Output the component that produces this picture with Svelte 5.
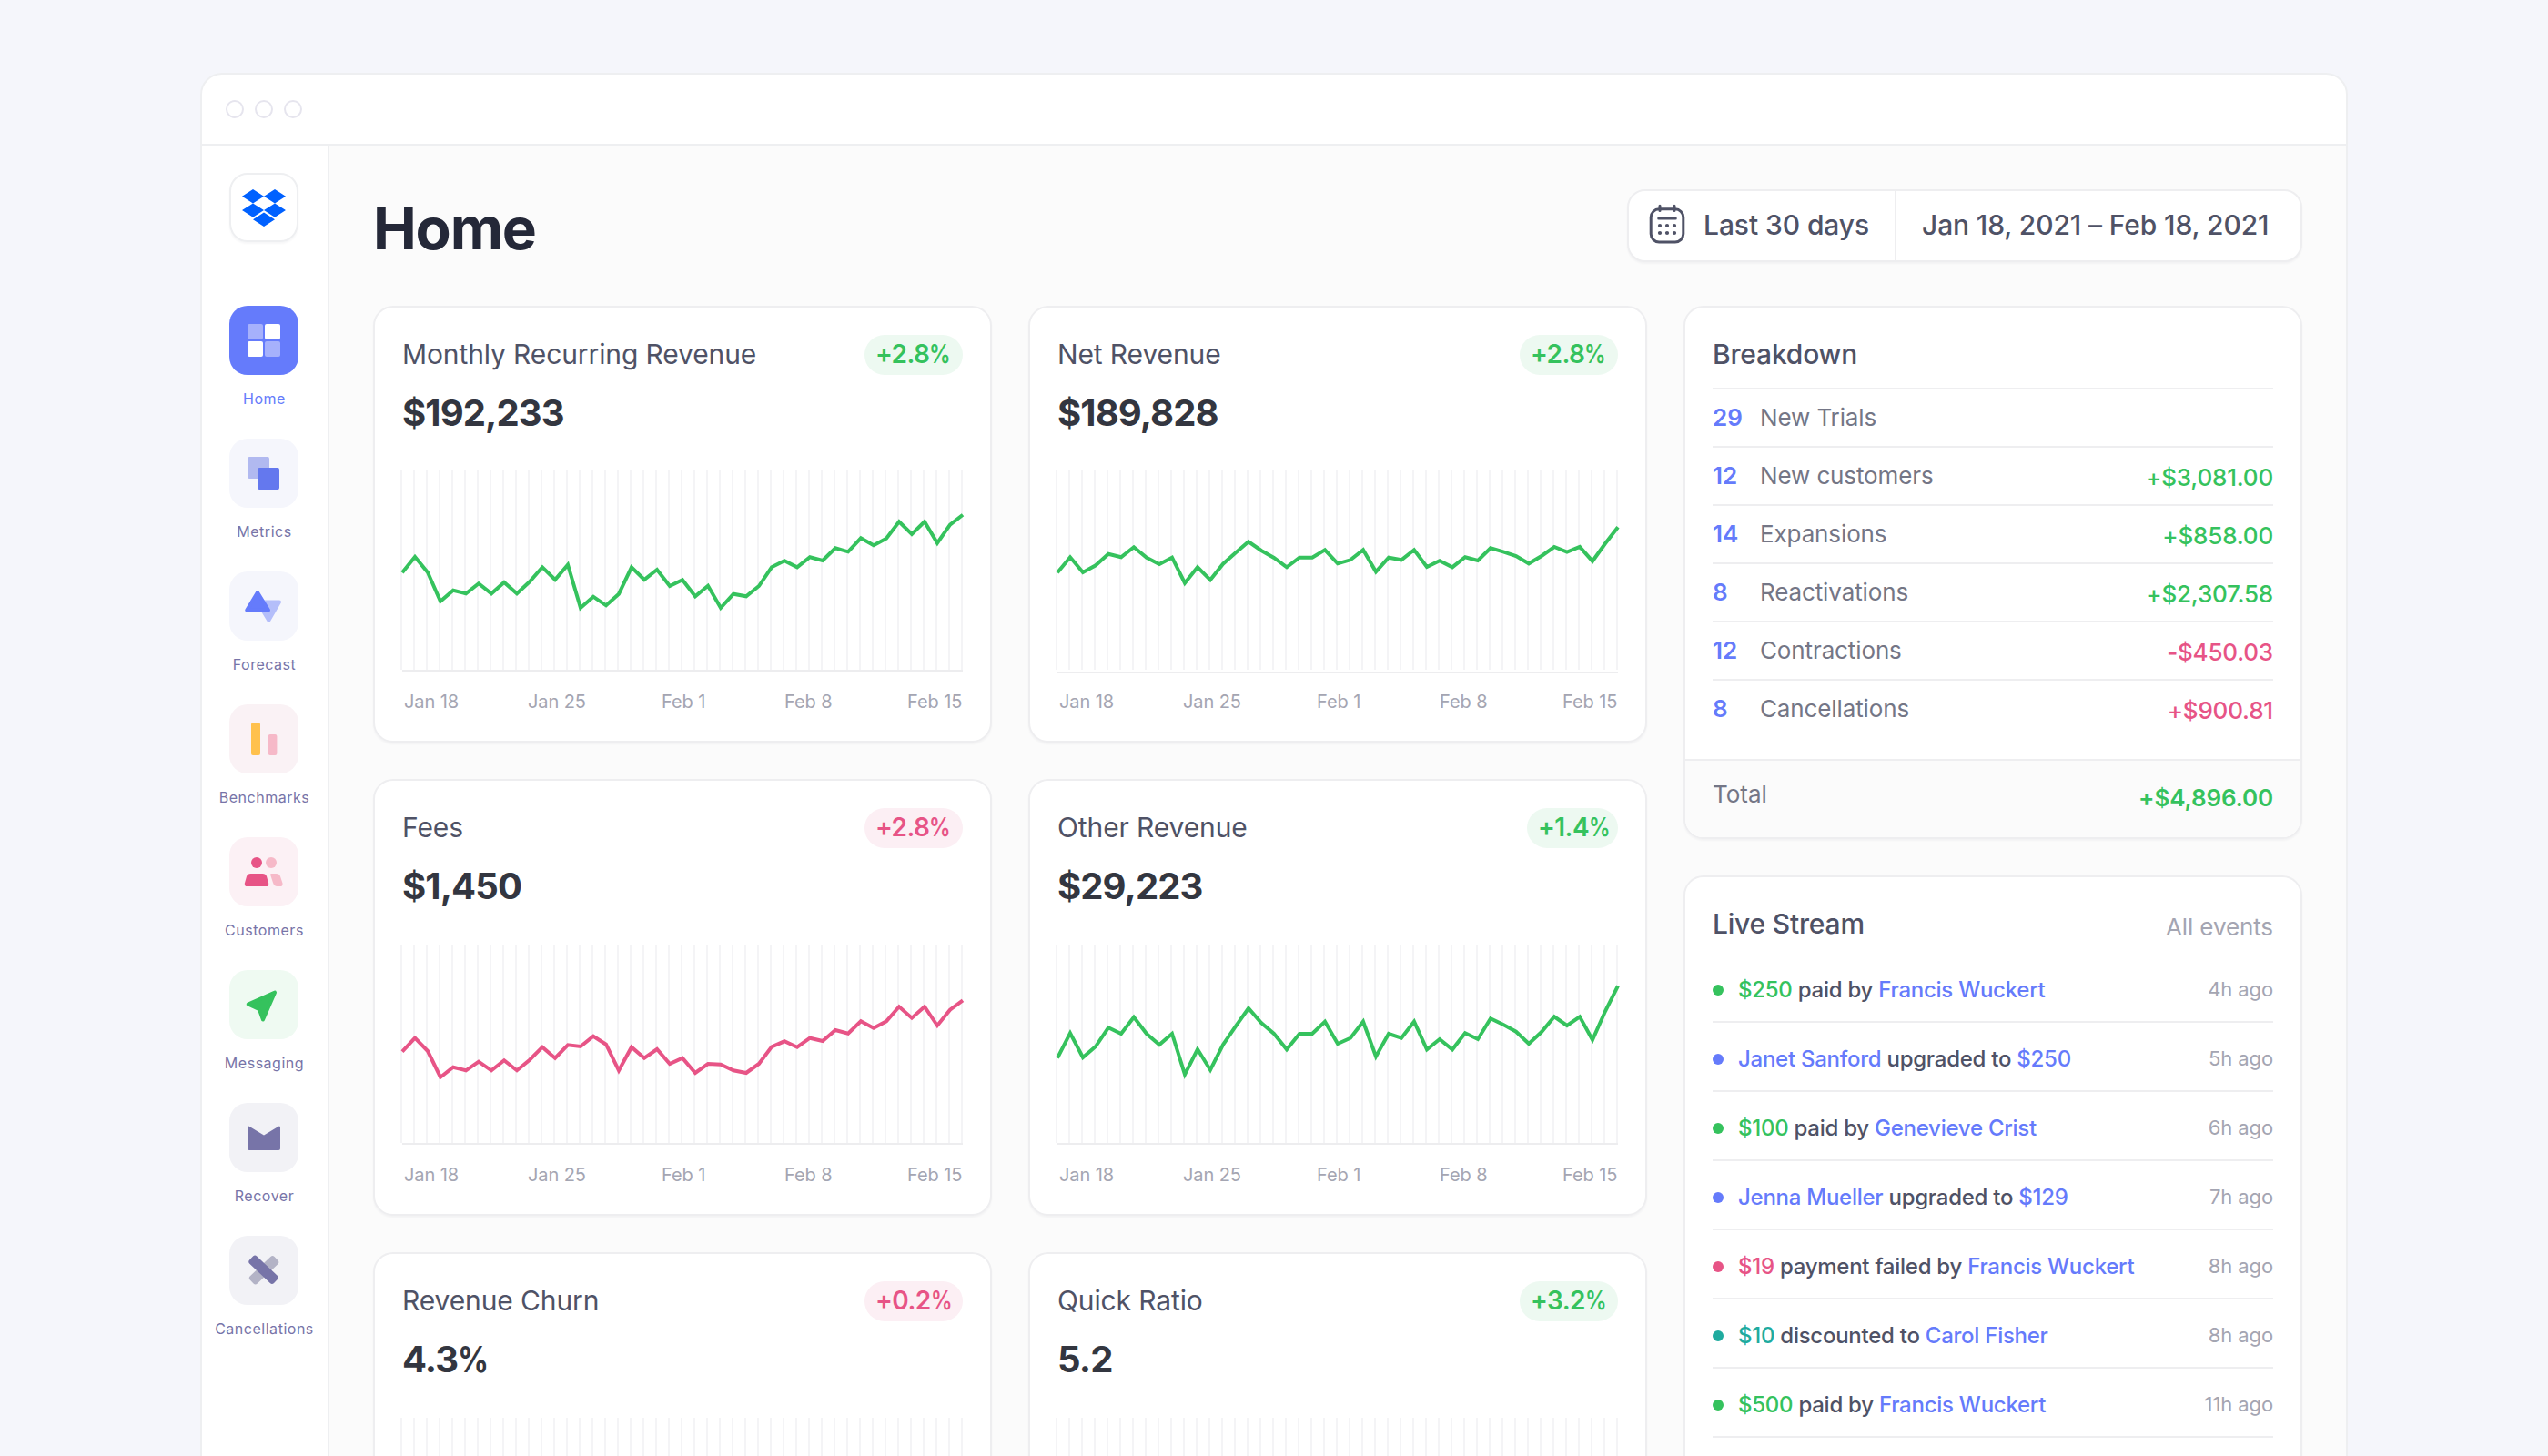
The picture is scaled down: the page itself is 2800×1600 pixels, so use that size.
<script>
  const nav = [
    { id: 'home', label: 'Home' },
    { id: 'metrics', label: 'Metrics' },
    { id: 'forecast', label: 'Forecast' },
    { id: 'benchmarks', label: 'Benchmarks' },
    { id: 'customers', label: 'Customers' },
    { id: 'messaging', label: 'Messaging' },
    { id: 'recover', label: 'Recover' },
    { id: 'cancellations', label: 'Cancellations' }
  ];

  // Samples are measured downwards from the top of the plot, in thirds of a pixel.
  const mrr = [340, 288, 339, 434, 398, 409, 376, 409, 372, 409, 370, 322, 363, 314, 456, 419, 448, 410, 322, 363, 330, 384, 364, 418, 383, 456, 410, 418, 384, 322, 301, 322, 289, 300, 259, 271, 226, 250, 227, 172, 213, 172, 242, 182, 149];
  const net = [340, 289, 339, 316, 278, 289, 256, 290, 312, 290, 374, 322, 364, 311, 274, 238, 267, 291, 322, 290, 290, 265, 310, 298, 265, 337, 290, 298, 265, 321, 301, 322, 289, 300, 259, 271, 285, 310, 285, 255, 272, 255, 302, 244, 190];
  const fees = [359, 314, 357, 443, 410, 421, 392, 421, 388, 421, 386, 344, 380, 337, 342, 308, 335, 421, 344, 380, 351, 399, 380, 429, 399, 401, 421, 429, 399, 343, 325, 344, 314, 324, 288, 299, 259, 281, 259, 211, 248, 211, 273, 221, 190];
  const other = [380, 298, 378, 342, 280, 300, 245, 300, 336, 300, 434, 351, 419, 336, 275, 216, 264, 300, 352, 300, 300, 260, 333, 314, 260, 375, 300, 314, 260, 352, 318, 352, 298, 318, 250, 270, 293, 333, 294, 244, 273, 244, 320, 226, 142];

  const dates = ['Jan 18', 'Jan 25', 'Feb 1', 'Feb 8', 'Feb 15'];
  const cards = [
    { title: 'Monthly Recurring Revenue', value: '$192,233', delta: '+2.8', tone: 'green', data: mrr, top: 0, axis: 220, dates },
    { title: 'Net Revenue', value: '$189,828', delta: '+2.8', tone: 'green', data: net, top: 0, axis: 222, dates },
    { title: 'Fees', value: '$1,450', delta: '+2.8', tone: 'pink', data: fees, top: 2, axis: 220, dates },
    { title: 'Other Revenue', value: '$29,223', delta: '+1.4', tone: 'green', narrow: true, data: other, top: 2, axis: 220, dates },
    { title: 'Revenue Churn', value: '4.3', percent: true, delta: '+0.2', tone: 'pink', data: fees, top: 2, axis: 220, dates: [] },
    { title: 'Quick Ratio', value: '5.2', delta: '+3.2', tone: 'green', data: other, top: 2, axis: 220, dates: [] }
  ];
  const ticks = Array.from({ length: 45 }, (_, i) => i * 14);
  const line = (data) => data.map((v, i) => `${2 + i * 14},${(v / 3).toFixed(1)}`).join(' ');

  const breakdown = [
    { n: 29, label: 'New Trials', amount: '', tone: 'green' },
    { n: 12, label: 'New customers', amount: '+$3,081.00', tone: 'green' },
    { n: 14, label: 'Expansions', amount: '+$858.00', tone: 'green' },
    { n: 8, label: 'Reactivations', amount: '+$2,307.58', tone: 'green' },
    { n: 12, label: 'Contractions', amount: '-$450.03', tone: 'pink' },
    { n: 8, label: 'Cancellations', amount: '+$900.81', tone: 'pink' }
  ];

  const events = [
    { tone: 'green', a: '$250', mid: 'paid by', b: 'Francis Wuckert', time: '4h ago' },
    { tone: 'blue', a: 'Janet Sanford', mid: 'upgraded to', b: '$250', time: '5h ago' },
    { tone: 'green', a: '$100', mid: 'paid by', b: 'Genevieve Crist', time: '6h ago' },
    { tone: 'blue', a: 'Jenna Mueller', mid: 'upgraded to', b: '$129', time: '7h ago' },
    { tone: 'pink', a: '$19', mid: 'payment failed by', b: 'Francis Wuckert', time: '8h ago' },
    { tone: 'teal', a: '$10', mid: 'discounted to', b: 'Carol Fisher', time: '8h ago' },
    { tone: 'green', a: '$500', mid: 'paid by', b: 'Francis Wuckert', time: '11h ago' }
  ];
</script>

<div class="page">
  <div class="window">
    <div class="titlebar">
      <span class="light"></span>
      <span class="light"></span>
      <span class="light"></span>
    </div>
    <div class="body">
      <nav class="sidebar">
        <div class="logo">
          <svg width="48" height="42" viewBox="0 0 48 42" fill="#0061ff">
            <path d="M12 0 24 7.7 12 15.4 0 7.7ZM36 0 48 7.7 36 15.4 24 7.7ZM12 15.4 24 23.1 12 30.8 0 23.1ZM36 15.4 48 23.1 36 30.8 24 23.1ZM24 25.6 36 33.3 24 41 12 33.3Z" />
          </svg>
        </div>
        {#each nav as item}
          <div class="nav-item {item.id}">
            <div class="tile">
              <svg width="76" height="76" viewBox="0 0 76 76">
                {#if item.id === 'home'}
                  <rect x="20" y="20" width="17" height="17" rx="2" fill="#a6b1fc" />
                  <rect x="39" y="20" width="17" height="17" rx="2" fill="#fff" />
                  <rect x="20" y="39" width="17" height="17" rx="2" fill="#fff" />
                  <rect x="39" y="39" width="17" height="17" rx="2" fill="#a6b1fc" />
                {:else if item.id === 'metrics'}
                  <rect x="20" y="20" width="24" height="24" rx="2" fill="#b1b9f0" />
                  <rect x="31" y="32" width="24" height="24" rx="2" fill="#6478ee" />
                {:else if item.id === 'forecast'}
                  <path d="M31 33.5H55L43.3 53.8Z" fill="#b4befa" stroke="#b4befa" stroke-width="4" stroke-linejoin="round" />
                  <path d="M19.2 42.5H43L31 23Z" fill="#657bfb" stroke="#657bfb" stroke-width="4" stroke-linejoin="round" />
                {:else if item.id === 'benchmarks'}
                  <rect x="24" y="20" width="10" height="36" rx="2" fill="#ffc14d" />
                  <rect x="42.8" y="33" width="9.6" height="23" rx="2" fill="#f6b9c8" />
                {:else if item.id === 'customers'}
                  <circle cx="30" cy="28" r="6" fill="#e75486" />
                  <circle cx="46" cy="28" r="6" fill="#f6b9c8" />
                  <path d="M23.5 40H36.5Q39.9 40 41 43L43.1 50.4Q43.6 54 40.4 54H19.6Q16.4 54 16.9 50.4L19 43Q20.1 40 23.5 40Z" fill="#e75486" />
                  <path d="M45.5 40H51.5Q55 40 56 43L58.5 50.4Q59 54 55.8 54H52.6Q49.2 54 48 50L45.2 41.5Z" fill="#f6b9c8" />
                {:else if item.id === 'messaging'}
                  <path d="M50 24.7 37 54.5 33 43.3 20.7 37.5Z" fill="#35c25d" stroke="#35c25d" stroke-width="4" stroke-linejoin="round" />
                {:else if item.id === 'recover'}
                  <path d="M20 27.2Q20 24.6 22.3 25.9L38 35.4 53.7 25.9Q56 24.6 56 27.2V50.2Q56 52 54.2 52H21.8Q20 52 20 50.2Z" fill="#7774a8" />
                {:else}
                  <rect x="19.6" y="32" width="37" height="11.5" rx="3" fill="#b3b3c6" transform="rotate(-43.5 38.1 37.8)" />
                  <rect x="19" y="31.5" width="37" height="11.5" rx="3" fill="#7774a8" transform="rotate(43.5 37.5 37.3)" />
                {/if}
              </svg>
            </div>
            <span class="nav-label">{item.label}</span>
          </div>
        {/each}
      </nav>

      <main class="content">
        <header class="header">
          <h1>Home</h1>
          <div class="picker">
            <div class="preset">
              <svg width="48" height="52" viewBox="0 0 48 52" fill="none" stroke="#4f5266" stroke-width="3" stroke-linecap="round">
                <rect x="6.2" y="7.8" width="35.6" height="36.2" rx="9" />
                <path d="M16 4.2v5.2M32 4.2v5.2M14.7 18h18.6" />
                <g fill="#4f5266" stroke="none">
                  <circle cx="16" cy="26" r="2.1" /><circle cx="24" cy="26" r="2.1" /><circle cx="32" cy="26" r="2.1" />
                  <circle cx="16" cy="34" r="2.1" /><circle cx="24" cy="34" r="2.1" /><circle cx="32" cy="34" r="2.1" />
                </g>
              </svg>
              <span>Last 30 days</span>
            </div>
            <div class="range">Jan 18, 2021 – Feb 18, 2021</div>
          </div>
        </header>

        <div class="columns">
          <section class="metrics-grid">
            {#each cards as card}
              <article class="card metric">
                <div class="metric-head">
                  <h2>{card.title}</h2>
                  <span class="badge {card.tone}" class:narrow={card.narrow}>{card.delta}<span class="pct">%</span></span>
                </div>
                <div class="value">{card.value}{#if card.percent}<span class="pct">%</span>{/if}</div>
                <svg class="chart" width="620" height="224" viewBox="0 0 620 224">
                  {#each ticks as x}
                    <rect {x} y={card.top} width="2" height={220 - card.top} fill="#f4f4f6" />
                  {/each}
                  <rect x="2" y={card.axis} width="616" height="2" fill="#ededef" />
                  <polyline class={card.tone} points={line(card.data)} />
                </svg>
                <div class="dates">
                  {#each card.dates as d}<span>{d}</span>{/each}
                </div>
              </article>
            {/each}
          </section>

          <aside class="side">
            <article class="card breakdown">
              <h3>Breakdown</h3>
              <ul>
                {#each breakdown as row}
                  <li>
                    <b>{row.n}</b>
                    <span class="name">{row.label}</span>
                    <span class="amount {row.tone}">{row.amount}</span>
                  </li>
                {/each}
              </ul>
              <footer>
                <span>Total</span>
                <strong>+$4,896.00</strong>
              </footer>
            </article>

            <article class="card stream">
              <div class="stream-head">
                <h3>Live Stream</h3>
                <span>All events</span>
              </div>
              {#each events as e}
                <div class="event">
                  <i class="dot {e.tone}"></i>
                  <p><span class={e.tone}>{e.a}</span> {e.mid} <span class="blue">{e.b}</span></p>
                  <time>{e.time}</time>
                </div>
              {/each}
            </article>
          </aside>
        </div>
      </main>
    </div>
  </div>
</div>

<style>
  :global(body) {
    overflow: hidden;
    background: #f5f6fb;
  }
  * {
    box-sizing: border-box;
    margin: 0;
    padding: 0;
  }
  .page {
    height: 1600px;
    padding: 80px 220px 0;
    overflow: hidden;
    background: #f5f6fb;
    font-family: Inter, 'Liberation Sans', sans-serif;
    color: #4f5266;
  }
  svg {
    display: block;
    flex: none;
  }
  .window {
    width: 2360px;
    height: 1600px;
    display: flex;
    flex-direction: column;
    border: 2px solid #eeeff1;
    border-radius: 24px;
    background: #fff;
    overflow: hidden;
  }
  .titlebar {
    height: 78px;
    flex: none;
    display: flex;
    align-items: center;
    gap: 12px;
    padding: 0 26px;
    border-bottom: 2px solid #eeeff1;
  }
  .light {
    width: 20px;
    height: 20px;
    border: 2px solid #e6e5ee;
    border-radius: 50%;
  }
  .body {
    flex: 1;
    display: flex;
    min-height: 0;
  }

  /* Sidebar */
  .sidebar {
    width: 140px;
    flex: none;
    display: flex;
    flex-direction: column;
    align-items: center;
    padding: 30px 2px 0 0;
    border-right: 2px solid #eeeff1;
  }
  .logo {
    width: 76px;
    height: 76px;
    flex: none;
    display: flex;
    justify-content: center;
    padding-top: 16px;
    margin-bottom: 70px;
    border: 2px solid #eeeff1;
    border-radius: 20px;
    box-shadow: 0 2px 2px rgba(40, 45, 80, 0.04);
  }
  .nav-item {
    height: 146px;
    flex: none;
    display: flex;
    flex-direction: column;
    align-items: center;
    gap: 16px;
    color: #7774a8;
  }
  .tile {
    width: 76px;
    height: 76px;
    border-radius: 20px;
    background: #f5f6fc;
  }
  .nav-label {
    padding-left: 1px;
    font-size: 16px;
    font-weight: 400;
    line-height: 20px;
    letter-spacing: 0.52px;
    white-space: nowrap;
  }
  .home { color: #657bfb; }
  .home .tile { background: #657bfb; }
  .benchmarks .tile { background: #faf2f5; }
  .customers .tile { background: #fcf1f5; }
  .messaging .tile { background: #effaf2; }
  .recover .tile,
  .cancellations .tile { background: #f2f2f6; }

  /* Main area */
  .content {
    flex: 1;
    padding: 48px 48px 0;
    background: #fbfbfb;
  }
  .header {
    height: 80px;
    display: flex;
    justify-content: space-between;
    margin-bottom: 48px;
  }
  h1 {
    font-size: 64px;
    font-weight: 700;
    line-height: 86px;
    letter-spacing: -1.2px;
    color: #242838;
  }
  .picker {
    width: 742px;
    height: 80px;
    display: flex;
    border: 2px solid #eeeef0;
    border-radius: 20px;
    background: #fff;
    box-shadow: 0 2px 2px rgba(40, 45, 80, 0.04);
    font-size: 30px;
    font-weight: 500;
    line-height: 74px;
    white-space: nowrap;
  }
  .preset {
    width: 294px;
    height: 76px;
    display: flex;
    align-items: center;
    gap: 16px;
    padding-left: 18px;
    border-right: 2px solid #eeeef0;
  }
  .preset span {
    padding-bottom: 2px;
    letter-spacing: -0.08px;
  }
  .range {
    padding-left: 28px;
    letter-spacing: -0.12px;
  }
  .columns {
    display: flex;
    gap: 40px;
  }
  .metrics-grid {
    display: grid;
    grid-template-columns: 680px 680px;
    grid-auto-rows: 480px;
    gap: 40px;
  }
  .side {
    width: 680px;
    display: flex;
    flex-direction: column;
    gap: 40px;
  }
  .card {
    border: 2px solid #eeeef0;
    border-radius: 22px;
    background: #fff;
    box-shadow: 0 2px 2px rgba(40, 45, 80, 0.04);
  }
  .metric {
    padding: 30px 30px 0;
  }
  .metric-head {
    height: 44px;
    display: flex;
    justify-content: space-between;
  }
  h2 {
    font-size: 30px;
    font-weight: 400;
    line-height: 43px;
    letter-spacing: -0.12px;
    color: #4f5266;
  }
  .badge {
    width: 108px;
    height: 44px;
    padding-left: 12px;
    border-radius: 22px;
    font-size: 28px;
    font-weight: 600;
    line-height: 43px;
    letter-spacing: -0.56px;
    white-space: nowrap;
    overflow: hidden;
  }
  /* A slightly condensed percent sign */
  .pct {
    display: inline-block;
    transform: scaleX(0.84);
    transform-origin: left;
  }
  .badge.narrow { width: 100px; }
  .badge.green { background: #edf9f1; }
  .badge.pink { background: #fceff4; }
  .value {
    margin-top: 18px;
    font-size: 40px;
    font-weight: 700;
    line-height: 48px;
    letter-spacing: -0.9px;
    color: #333640;
  }
  .chart {
    margin: 38px 0 0 -2px;
  }
  polyline {
    fill: none;
    stroke: currentColor;
    stroke-width: 4;
    stroke-linejoin: miter;
  }
  .dates {
    display: grid;
    grid-template-columns: 136px 147px 135px 135px auto;
    padding-left: 2px;
    margin-top: 19px;
    font-size: 20px;
    line-height: 24px;
    letter-spacing: -0.1px;
    white-space: nowrap;
    color: #a4a5b2;
  }

  .green { color: #35c25d; }
  .pink { color: #e75486; }
  .blue { color: #657bfb; }
  .teal { color: #1fab9f; }

  /* Breakdown */
  .breakdown {
    height: 586px;
    overflow: hidden;
    font-size: 26px;
    color: #747686;
  }
  h3 {
    font-size: 30px;
    font-weight: 500;
    line-height: 42px;
    letter-spacing: -0.2px;
    color: #4f5266;
  }
  .breakdown h3 {
    height: 90px;
    margin: 0 30px;
    padding-top: 30px;
    border-bottom: 2px solid #eeeef0;
  }
  ul {
    list-style: none;
    padding: 0 30px;
  }
  li {
    height: 64px;
    display: flex;
    align-items: flex-start;
    line-height: 62px;
    border-bottom: 2px solid #eeeef0;
  }
  li:last-child {
    border-bottom: 0;
  }
  b {
    width: 52px;
    font-weight: 600;
    color: #657bfb;
  }
  .name {
    letter-spacing: -0.12px;
  }
  .amount {
    margin-left: auto;
    font-weight: 500;
    line-height: 66px;
    letter-spacing: -0.18px;
  }
  .breakdown footer {
    height: 86px;
    display: flex;
    justify-content: space-between;
    align-items: flex-start;
    margin-top: 22px;
    padding: 0 30px;
    border-top: 2px solid #eeeef0;
    background: #fbfbfb;
    line-height: 74px;
  }
  strong {
    font-weight: 600;
    line-height: 82px;
    letter-spacing: -0.15px;
    color: #35c25d;
  }

  /* Live stream */
  .stream {
    height: 760px;
    padding: 0 30px;
  }
  .stream-head {
    height: 84px;
    display: flex;
    justify-content: space-between;
    align-items: flex-start;
    padding-top: 30px;
    font-size: 26px;
    line-height: 50px;
    letter-spacing: -0.1px;
    color: #a4a5b2;
  }
  .event {
    height: 76px;
    display: flex;
    align-items: center;
    padding-top: 4px;
    border-bottom: 2px solid #eeeef0;
  }
  .dot {
    width: 12px;
    height: 12px;
    margin: 2px 16px 0 0;
    border-radius: 50%;
    background: currentColor;
  }
  p {
    flex: 1;
    padding-top: 2px;
    font-size: 24px;
    font-weight: 500;
    line-height: 30px;
    letter-spacing: -0.26px;
  }
  time {
    font-size: 22px;
    line-height: 30px;
    letter-spacing: -0.1px;
    color: #a4a5b2;
  }
</style>
